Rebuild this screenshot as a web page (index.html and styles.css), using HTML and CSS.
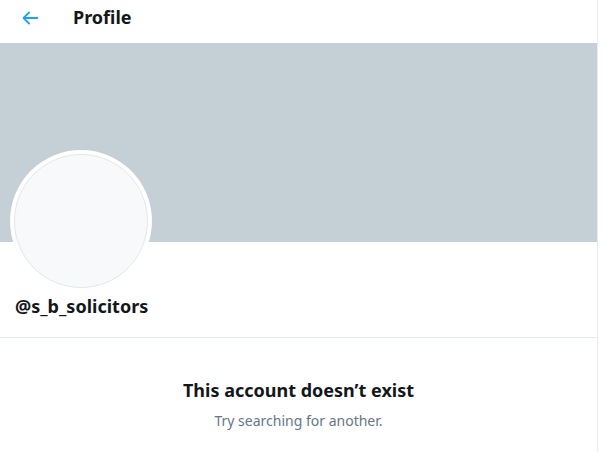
FILE: index.html
```html
<!DOCTYPE html>
<html lang="en">
<head>
<meta charset="utf-8">
<title>Profile</title>
<link rel="stylesheet" href="styles.css">
</head>
<body>
<main class="column">
  <header class="topbar">
    <svg class="back" viewBox="0 0 24 24" aria-hidden="true"><path d="M20 11H7.414l4.293-4.293c.39-.39.39-1.023 0-1.414s-1.023-.39-1.414 0l-6 6c-.39.39-.39 1.023 0 1.414l6 6c.195.195.45.293.707.293s.512-.098.707-.293c.39-.39.39-1.023 0-1.414L7.414 13H20c.553 0 1-.447 1-1s-.447-1-1-1z"/></svg>
    <h1 class="title">Profile</h1>
  </header>
  <div class="banner"></div>
  <section class="identity">
    <div class="avatar"><div class="avatar-inner"></div></div>
    <div class="handle">@s_b_solicitors</div>
  </section>
  <section class="empty">
    <div class="empty-title">This account doesn’t exist</div>
    <div class="empty-sub">Try searching for another.</div>
  </section>
</main>
</body>
</html>
```
FILE: styles.css
```css
html, body {
  margin: 0;
  padding: 0;
  background: #ffffff;
}
body {
  font-family: "Noto Sans", "Open Sans", sans-serif;
  color: #14171a;
}
.column {
  width: 598px;
  height: 452px;
  box-sizing: border-box;
  border-right: 1px solid #e6ecf0;
}
.topbar {
  height: 43px;
  display: flex;
  align-items: center;
  padding-left: 19px;
  box-sizing: border-box;
}
.back {
  width: 22px;
  height: 22px;
  fill: #1da1f2;
  margin-top: -8px;
}
.title {
  margin: 0 0 0 32px;
  font-size: 18px;
  font-weight: 700;
  line-height: 24px;
  margin-top: -10px;
}
.banner {
  height: 199px;
  background: #c4cfd6;
}
.identity {
  display: flex;
  flex-direction: column;
  align-items: flex-start;
  padding: 0 15px 0 10px;
  height: 95px;
  border-bottom: 1px solid #e6ecf0;
}
.avatar {
  width: 142px;
  height: 142px;
  flex: none;
  margin-top: -92px;
  border-radius: 50%;
  background: #ffffff;
  padding: 4px;
  box-sizing: border-box;
}
.avatar-inner {
  width: 100%;
  height: 100%;
  box-sizing: border-box;
  border-radius: 50%;
  border: 1px solid #e1e8ed;
  background: #f7f9fa;
}
.handle {
  margin: 2px 0 0 5px;
  font-size: 18px;
  font-weight: 700;
  line-height: 24px;
}
.empty {
  display: flex;
  flex-direction: column;
  align-items: center;
  padding-top: 39px;
}
.empty-title {
  font-size: 18px;
  font-weight: 700;
  line-height: 26px;
}
.empty-sub {
  margin-top: 8px;
  font-size: 14px;
  line-height: 20px;
  color: #657786;
}
```
